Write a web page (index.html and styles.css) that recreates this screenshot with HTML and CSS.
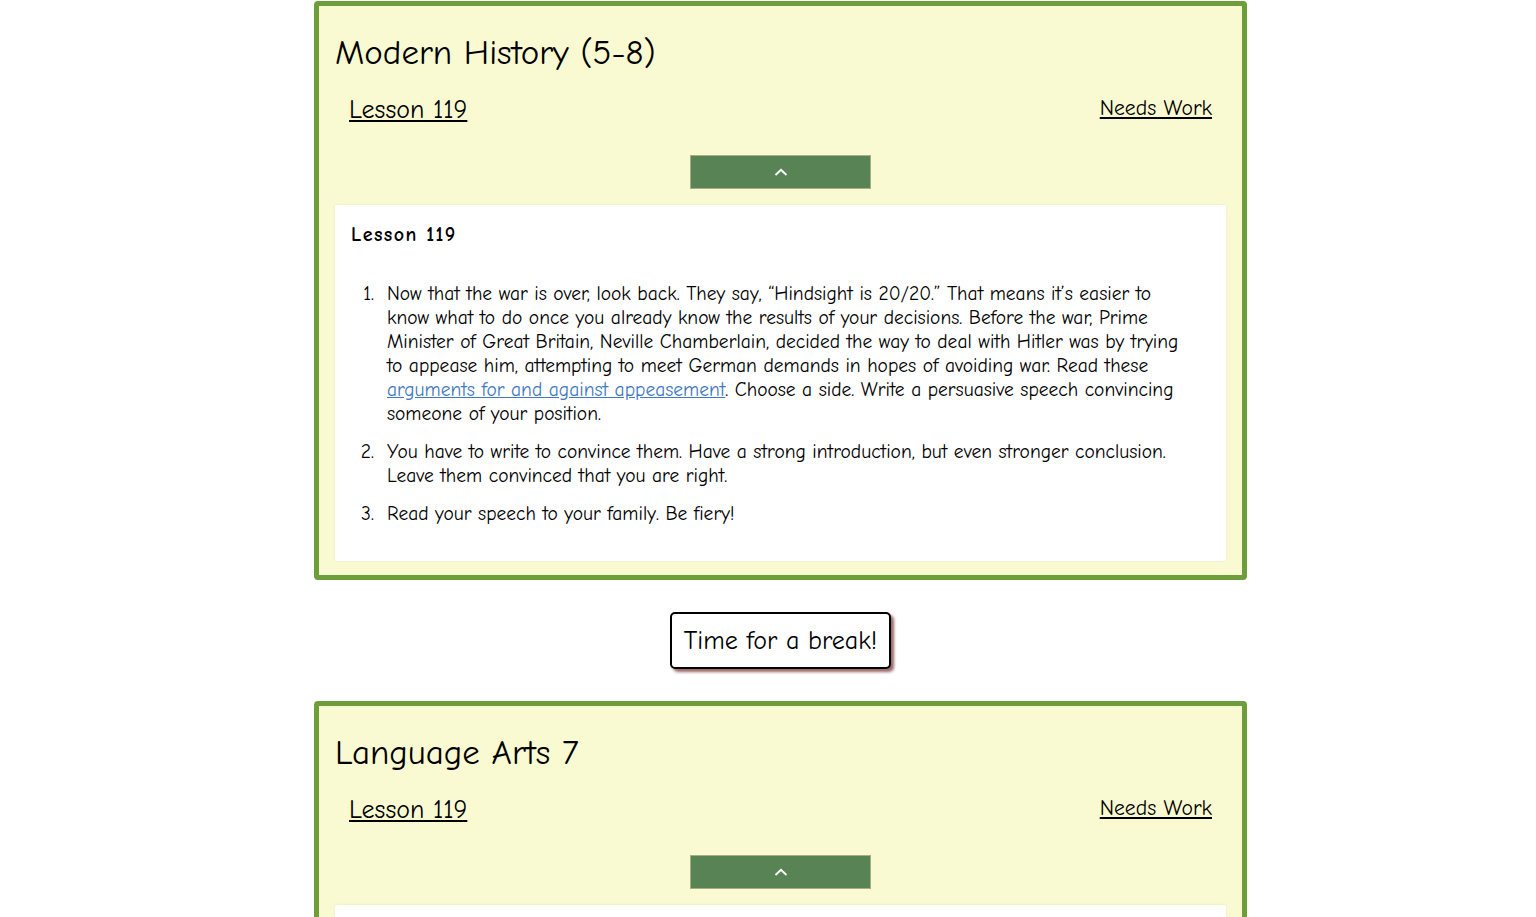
FILE: index.html
```html
<!DOCTYPE html>
<html>
<head>
<meta charset="utf-8">
<link rel="stylesheet" href="styles.css">
</head>
<body>
<main class="column">
  <section class="card">
    <h2 class="card-title">Modern History (5-8)</h2>
    <div class="card-row">
      <a class="lesson-link" href="#">Lesson 119</a>
      <a class="status-link" href="#">Needs Work</a>
    </div>
    <div class="toggle-wrap">
      <button class="toggle" type="button" aria-label="Collapse">
        <svg width="14" height="8" viewBox="0 0 14 8"><path d="M1.5 7 L7 1.8 L12.5 7" fill="none" stroke="#fff" stroke-width="2"/></svg>
      </button>
    </div>
    <div class="lesson-box">
      <h3 class="lesson-title">Lesson 119</h3>
      <ol class="lesson-list">
        <li>Now that the war is over, look back. They say, “Hindsight is 20/20.” That means it’s easier to know what to do once you already know the results of your decisions. Before the war, Prime Minister of Great Britain, Neville Chamberlain, decided the way to deal with Hitler was by trying to appease him, attempting to meet German demands in hopes of avoiding war. Read these <a href="#">arguments for and against appeasement</a>. Choose a side. Write a persuasive speech convincing someone of your position.</li>
        <li>You have to write to convince them. Have a strong introduction, but even stronger conclusion. Leave them convinced that you are right.</li>
        <li>Read your speech to your family. Be fiery!</li>
      </ol>
    </div>
  </section>

  <div class="break-wrap">
    <button class="break-btn" type="button">Time for a break!</button>
  </div>

  <section class="card">
    <h2 class="card-title">Language Arts 7</h2>
    <div class="card-row">
      <a class="lesson-link" href="#">Lesson 119</a>
      <a class="status-link" href="#">Needs Work</a>
    </div>
    <div class="toggle-wrap">
      <button class="toggle" type="button" aria-label="Collapse">
        <svg width="14" height="8" viewBox="0 0 14 8"><path d="M1.5 7 L7 1.8 L12.5 7" fill="none" stroke="#fff" stroke-width="2"/></svg>
      </button>
    </div>
    <div class="lesson-box">
      <h3 class="lesson-title">Lesson 119</h3>
      <ol class="lesson-list">
        <li>Read the next chapter of your book.</li>
      </ol>
    </div>
  </section>
</main>
</body>
</html>
```

FILE: styles.css
```css
html, body {
  margin: 0;
  padding: 0;
  background: #ffffff;
}
body {
  font-family: "Comic Sans MS", "Comic Neue", "DejaVu Sans", sans-serif;
  color: #000;
  overflow: hidden;
}
.column {
  width: 933px;
  margin-left: 314px;
  padding-top: 1px;
}
.card {
  box-sizing: border-box;
  background: #fafad2;
  border: 5px solid #6e9e3c;
  border-radius: 4px;
  padding: 0 16px 14px 16px;
}
.card-title {
  margin: 0;
  padding: 24px 0 0 0;
  font-size: 35px;
  font-weight: normal;
  line-height: 46px;
}
.card-row {
  display: flex;
  justify-content: space-between;
  align-items: flex-start;
  padding: 0 14px 0 14px;
  margin-top: 19px;
}
.lesson-link {
  color: #000;
  font-size: 26px;
  line-height: 30px;
}
.status-link {
  color: #000;
  font-size: 21.7px;
  line-height: 26px;
}
.toggle-wrap {
  display: flex;
  justify-content: center;
  padding: 30px 0 16px 0;
}
.toggle {
  width: 181px;
  height: 34px;
  background: #588455;
  border: 1px solid #a9ad86;
  display: flex;
  align-items: center;
  justify-content: center;
  padding: 0;
  cursor: pointer;
}
.lesson-box {
  background: #ffffff;
  box-shadow: 0 0 3px rgba(0,0,0,0.08);
  padding: 18px 16px 20px 16px;
  border-radius: 2px;
}
.lesson-title {
  margin: 0;
  font-size: 20px;
  font-weight: bold;
  letter-spacing: 1.4px;
  line-height: 24px;
}
.lesson-list {
  margin: 35px 21px 15px 0;
  padding-left: 36px;
  font-size: 19.5px;
  line-height: 24px;
}
.lesson-list li::marker {
  content: counter(list-item) ".\00a0\00a0";
}
.lesson-list li {
  margin-bottom: 14px;
}
.lesson-list li:last-child {
  margin-bottom: 0;
}
.lesson-list a {
  color: #3f78c0;
}
.break-wrap {
  display: flex;
  justify-content: center;
  padding: 32px 0 32px 0;
}
.break-btn {
  font-family: inherit;
  font-size: 26px;
  background: #fff;
  color: #000;
  border: 2px solid #000;
  border-radius: 5px;
  padding: 8px 12px;
  height: 57px;
  box-shadow: 3px 3px 3px rgba(110, 40, 40, 0.7);
  cursor: pointer;
}
```
